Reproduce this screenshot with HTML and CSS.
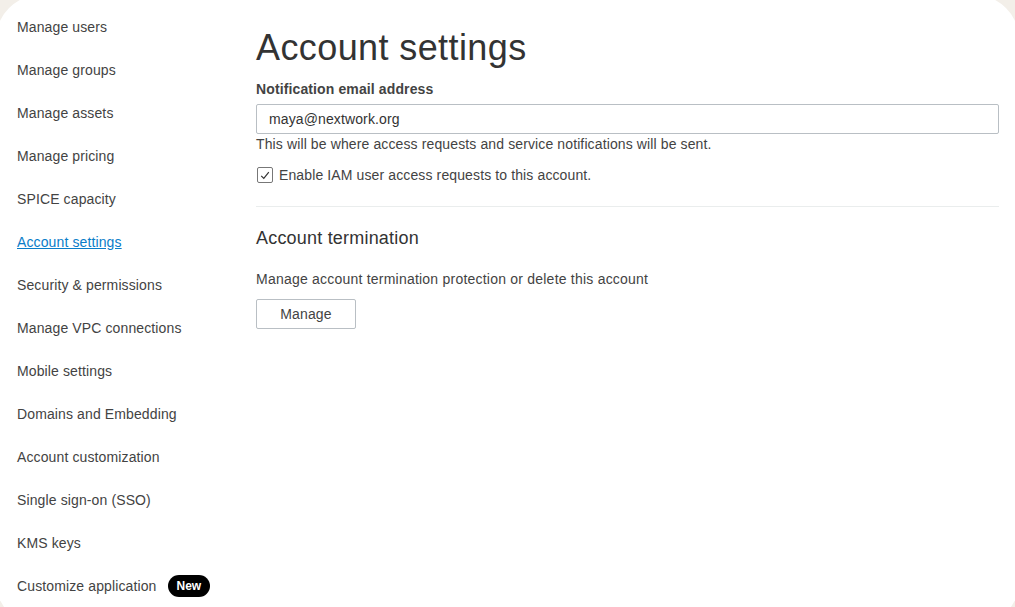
FILE: index.html
```html
<!DOCTYPE html>
<html lang="en">
<head>
<meta charset="utf-8">
<title>Account settings</title>
<link rel="stylesheet" href="styles.css">
</head>
<body>
<div class="card">
  <nav class="sidebar">
    <a class="nav-item" href="#">Manage users</a>
    <a class="nav-item" href="#">Manage groups</a>
    <a class="nav-item" href="#">Manage assets</a>
    <a class="nav-item" href="#">Manage pricing</a>
    <a class="nav-item" href="#">SPICE capacity</a>
    <a class="nav-item active" href="#">Account settings</a>
    <a class="nav-item" href="#">Security &amp; permissions</a>
    <a class="nav-item" href="#">Manage VPC connections</a>
    <a class="nav-item" href="#">Mobile settings</a>
    <a class="nav-item" href="#">Domains and Embedding</a>
    <a class="nav-item" href="#">Account customization</a>
    <a class="nav-item" href="#">Single sign-on (SSO)</a>
    <a class="nav-item" href="#">KMS keys</a>
    <a class="nav-item" href="#">Customize application <span class="badge">New</span></a>
  </nav>
  <main class="main">
    <h1 class="title">Account settings</h1>
    <label class="field-label" for="email">Notification email address</label>
    <input class="input" id="email" type="text" value="maya@nextwork.org">
    <p class="helper">This will be where access requests and service notifications will be sent.</p>
    <label class="check-row">
      <span class="checkbox">
        <svg width="10" height="9" viewBox="0 0 10 9"><path d="M1.2 4.8 L3.8 7.4 L8.8 1.2" fill="none" stroke="#333" stroke-width="1.2"/></svg>
      </span>
      <span>Enable IAM user access requests to this account.</span>
    </label>
    <hr class="divider">
    <h2 class="subtitle">Account termination</h2>
    <p class="desc">Manage account termination protection or delete this account</p>
    <button class="btn" type="button">Manage</button>
  </main>
</div>
</body>
</html>
```

FILE: styles.css
```css
html, body {
  margin: 0;
  padding: 0;
  background: #f3efe9;
  overflow: hidden;
}
body {
  font-family: "Liberation Sans", Arial, sans-serif;
  font-size: 14px;
  line-height: 20px;
  letter-spacing: 0.12px;
  color: #434343;
}
.card {
  margin: -6px -5px 0 -5px;
  height: 633px;
  background: #ffffff;
  border-radius: 48px;
  display: flex;
}
.sidebar {
  width: 239px;
  padding: 23px 0 0 22px;
  display: flex;
  flex-direction: column;
  gap: 23px;
  flex-shrink: 0;
}
.nav-item {
  display: flex;
  align-items: center;
  height: 20px;
  color: #434343;
  text-decoration: none;
  white-space: nowrap;
}
.nav-item.active {
  color: #0a7dc9;
  text-decoration: underline;
}
.badge {
  margin-left: 12px;
  background: #000;
  color: #fff;
  font-weight: bold;
  font-size: 12px;
  line-height: 22px;
  height: 22px;
  padding: 0 9px 0 8px;
  border-radius: 11px;
  letter-spacing: 0;
}
.main {
  flex: 1;
  padding: 32px 21px 0 0;
  display: flex;
  flex-direction: column;
  align-items: flex-start;
}
.title {
  margin: 0;
  font-size: 36px;
  line-height: 44px;
  font-weight: normal;
  letter-spacing: 0.4px;
  color: #333;
}
.field-label {
  margin-top: 9px;
  font-weight: bold;
  color: #434343;
}
.input {
  margin-top: 5px;
  box-sizing: border-box;
  width: 100%;
  height: 30px;
  border: 1px solid #b9bfc4;
  border-radius: 2px;
  padding: 0 12px;
  font-family: inherit;
  font-size: 14px;
  letter-spacing: 0.12px;
  color: #333;
  background: #fff;
}
.helper {
  margin: 0;
}
.check-row {
  margin-top: 11px;
  display: flex;
  align-items: center;
  gap: 6px;
  padding-left: 1px;
}
.checkbox {
  box-sizing: border-box;
  width: 16px;
  height: 16px;
  border: 1px solid #777;
  border-radius: 2px;
  display: flex;
  align-items: center;
  justify-content: center;
}
.divider {
  margin: 21px 0 0 0;
  width: 100%;
  border: 0;
  border-top: 1px solid #eaeded;
  height: 0;
}
.subtitle {
  margin: 19px 0 0 0;
  font-size: 18px;
  line-height: 24px;
  font-weight: normal;
  letter-spacing: 0.2px;
  color: #333;
}
.desc {
  margin: 19px 0 0 0;
  letter-spacing: 0.22px;
}
.btn {
  margin-top: 10px;
  width: 100px;
  height: 30px;
  background: #fff;
  border: 1px solid #b9bfc4;
  border-radius: 2px;
  font-family: inherit;
  font-size: 14px;
  letter-spacing: 0.12px;
  color: #434343;
  padding: 0;
}
```
